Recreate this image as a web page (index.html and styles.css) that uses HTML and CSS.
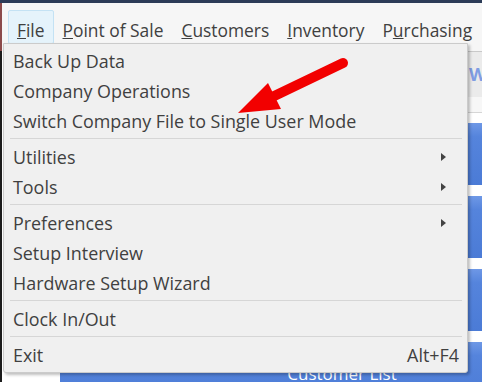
FILE: index.html
```html
<!DOCTYPE html>
<html>
<head>
<meta charset="utf-8">
<link rel="stylesheet" href="styles.css">
</head>
<body>
<div class="app">
  <div class="titlebar"></div>
  <nav class="menubar">
    <span class="mitem active"><u>F</u>ile</span>
    <span class="mitem"><u>P</u>oint of Sale</span>
    <span class="mitem"><u>C</u>ustomers</span>
    <span class="mitem"><u>I</u>nventory</span>
    <span class="mitem">P<u>u</u>rchasing</span>
  </nav>
  <div class="content">
    <div class="side"></div>
    <div class="main">
      <div class="welcome">W</div>
      <div class="divider"></div>
      <div class="tiles">
        <div class="tile"></div>
        <div class="tile"></div>
        <div class="tile"></div>
        <div class="tile"><span>Customer List</span></div>
      </div>
    </div>
  </div>

  <div class="dropdown">
    <div class="item"><span>Back Up Data</span></div>
    <div class="item"><span>Company Operations</span></div>
    <div class="item"><span>Switch Company File to Single User Mode</span></div>
    <div class="sep"></div>
    <div class="item"><span>Utilities</span><span class="tri"></span></div>
    <div class="item"><span>Tools</span><span class="tri"></span></div>
    <div class="sep"></div>
    <div class="item"><span>Preferences</span><span class="tri"></span></div>
    <div class="item"><span>Setup Interview</span></div>
    <div class="item"><span>Hardware Setup Wizard</span></div>
    <div class="sep"></div>
    <div class="item"><span>Clock In/Out</span></div>
    <div class="sep"></div>
    <div class="item"><span>Exit</span><span class="key">Alt+F4</span></div>
  </div>

  <svg class="arrow" viewBox="0 0 482 382" width="482" height="382">
    <line x1="343" y1="63" x2="268" y2="99" stroke="#f20000" stroke-width="10" stroke-linecap="round"/>
    <polygon points="238,113 268,83 281,109" fill="#f20000"/>
  </svg>
</div>
</body>
</html>
```
FILE: styles.css
```css
html, body {
  margin: 0;
  padding: 0;
}
body {
  width: 482px;
  height: 382px;
  overflow: hidden;
  background: #ffffff;
  font-family: "Open Sans", "Noto Sans", sans-serif;
}
.app {
  position: relative;
  width: 482px;
  height: 382px;
  display: flex;
  flex-direction: column;
  overflow: hidden;
}
.titlebar {
  flex: none;
  height: 3px;
  background: #2c3b57;
}
.menubar {
  flex: none;
  height: 48px;
  box-sizing: border-box;
  display: flex;
  align-items: flex-start;
  padding: 7px 0 0 6px;
  background: #f6f6f6;
  border-left: 2px solid #8c4a4a;
}
.mitem {
  padding: 8px 8px 1px;
  line-height: 23px;
  font-size: 17.4px;
  color: #404040;
  border: 1px solid transparent;
  white-space: nowrap;
}
.mitem.active {
  background: #e5f3fb;
  border-color: #c4e2f4;
  border-radius: 2px;
}
.content {
  flex: 1;
  display: grid;
  grid-template-columns: 58px 1fr;
  border-left: 2px solid #1c1c1c;
  min-height: 0;
  overflow: hidden;
}
.side {
  background: #ffffff;
}
.main {
  border-top: 1px solid #c9c9c9;
  display: flex;
  flex-direction: column;
  min-width: 0;
}
.welcome {
  flex: none;
  height: 45px;
  background: #ebebeb;
  padding-left: 409px;
  font-size: 18px;
  font-weight: bold;
  color: #7f9de3;
  line-height: 45px;
  overflow: hidden;
  white-space: nowrap;
}
.divider {
  flex: none;
  height: 15px;
  background: #f7f7f7;
  border-bottom: 1px solid #d6d6d6;
}
.tiles {
  display: flex;
  flex-direction: column;
  gap: 11px;
  padding-top: 10px;
}
.tile {
  flex: none;
  height: 62px;
  background: linear-gradient(#6e98e6 0, #5584dc 22%, #4b7bd6 100%);
  display: flex;
  align-items: center;
  justify-content: center;
  padding-left: 142px;
  color: #ffffff;
  font-size: 17px;
}
.dropdown {
  position: absolute;
  top: 43px;
  left: 3px;
  width: 465px;
  height: 330px;
  box-sizing: border-box;
  background: #f0f0f0;
  border: 1px solid #cbcbcb;
  padding: 2px 0;
  box-shadow: 2px 2px 3px rgba(0, 0, 0, 0.25);
  border-radius: 0 0 3px 3px;
}
.item {
  height: 30px;
  display: flex;
  align-items: center;
  justify-content: space-between;
  padding: 0 8px 0 9px;
  font-size: 17.9px;
  line-height: 30px;
  color: #404040;
  white-space: nowrap;
}
.tri {
  width: 0;
  height: 0;
  border-top: 4px solid transparent;
  border-bottom: 4px solid transparent;
  border-left: 5px solid #444444;
  margin-right: 13px;
}
.key {
  color: #404040;
}
.sep {
  height: 1px;
  background: #d6d6d6;
  margin: 2px 5px 3px 6px;
}
.arrow {
  position: absolute;
  top: 0;
  left: 0;
  pointer-events: none;
}
```
